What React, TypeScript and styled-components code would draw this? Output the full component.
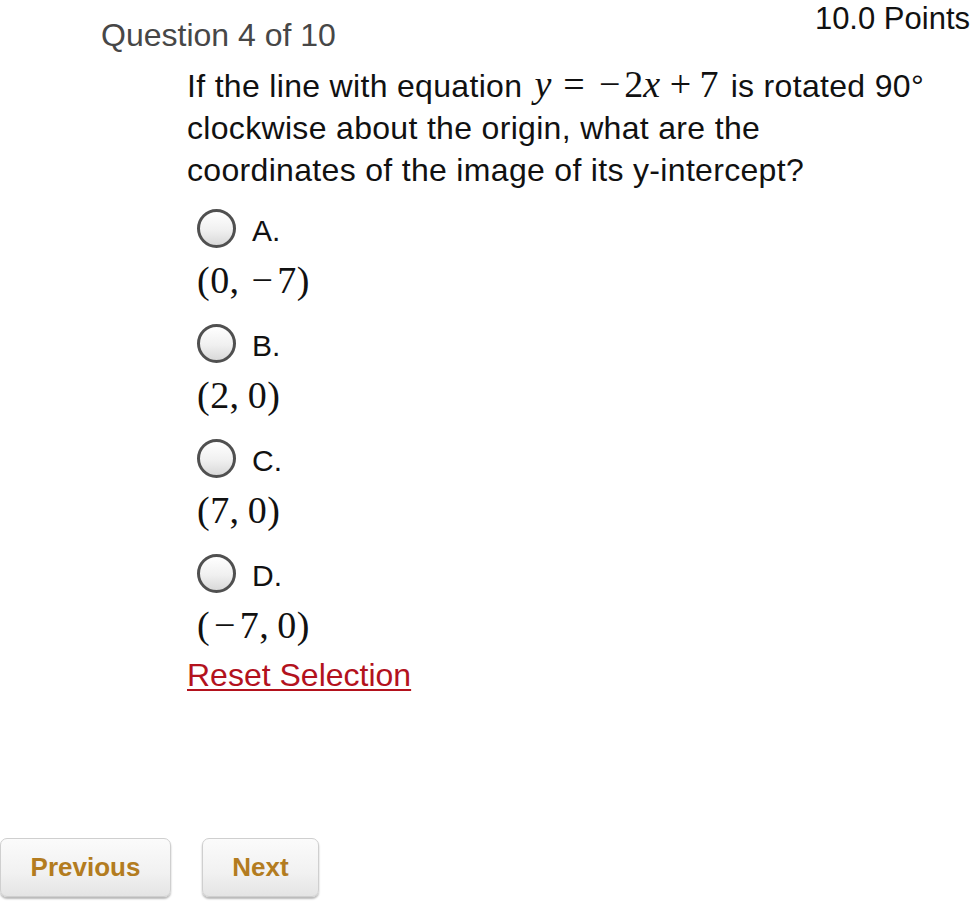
import styled, { createGlobalStyle } from "styled-components";

const GlobalStyle = createGlobalStyle`
    html, body {
        margin: 0;
        padding: 0;
        background: #ffffff;
    }

    body {
        font-family: "Liberation Sans", Arial, sans-serif;
        color: #111111;
    }
`;

// Page
const Page = styled.div`
    width: 975px;
    min-height: 905px;
    display: flex;
    flex-direction: column;
`;

// Header
const Header = styled.header`
    display: flex;
    flex-direction: row;
    justify-content: space-between;
    align-items: flex-start;
`;

const QuestionCount = styled.h2`
    margin: 17px 0 0 101px;
    font-size: 32px;
    line-height: 36px;
    font-weight: 400;
    color: #474747;
`;

const Points = styled.span`
    margin: 1px 5px 0 0;
    font-size: 31px;
    line-height: 36px;
    color: #111111;
`;

// Question body
const Body = styled.main`
    display: flex;
    flex-direction: column;
    padding-left: 187px;
    margin-top: 12px;
`;

const Prompt = styled.p`
    margin: 0;
    width: 748px;
    font-size: 32px;
    line-height: 42px;
    letter-spacing: 0.01em;
    color: #111111;
`;

const MathText = styled.span<{ size?: number }>`
    font-family: "Liberation Serif", "Times New Roman", serif;
    font-size: ${({ size }) => `${size ?? 38}px`};
    line-height: 1;
    color: #111111;
    white-space: nowrap;
`;

const InlineMath = styled(MathText)`
    padding: 0 3px;
    letter-spacing: 0;
`;

const Var = styled.i`
    font-style: italic;
    padding-right: 0.03em;
`;

const Op = styled.span<{ space: number }>`
    padding: 0 ${({ space }) => `${space}em`};
`;

const Minus = styled.span`
    padding: 0 0.1em;
`;

// Options
const Options = styled.div`
    display: flex;
    flex-direction: column;
    gap: 17px;
    margin-top: 15px;
    padding-left: 10px;
`;

const Option = styled.label`
    display: flex;
    flex-direction: column;
    cursor: pointer;
`;

const ChoiceRow = styled.div`
    display: flex;
    flex-direction: row;
    align-items: center;
    gap: 16px;
    height: 44px;
`;

const Radio = styled.span`
    box-sizing: border-box;
    width: 39px;
    height: 39px;
    border-radius: 50%;
    border: 3px solid #505050;
    background: linear-gradient(180deg, #ffffff 0%, #f0f0f0 55%, #d9d9d9 100%);
`;

const Letter = styled.span`
    font-size: 30px;
    line-height: 32px;
    margin-top: 6px;
    color: #111111;
`;

const Answer = styled.div`
    height: 48px;
    margin-top: 6px;
    display: flex;
    align-items: center;
    letter-spacing: 0.03em;
`;

// Reset
const ResetLink = styled.a`
    align-self: flex-start;
    margin-top: 5px;
    font-size: 32px;
    line-height: 42px;
    color: #b3121d;
    text-decoration: underline;
    text-decoration-thickness: 2px;
    text-underline-offset: 3px;
    cursor: pointer;
`;

// Footer buttons
const Footer = styled.footer`
    display: flex;
    flex-direction: row;
    gap: 31px;
    margin-top: 142px;
`;

const NavButton = styled.button<{ width: number }>`
    width: ${({ width }) => `${width}px`};
    height: 59px;
    border: 1px solid #cfcfcf;
    border-radius: 7px;
    background: linear-gradient(180deg, #fbfbfb 0%, #f1f1f1 60%, #e4e4e4 100%);
    box-shadow: 0 2px 2px rgba(0, 0, 0, 0.28);
    font-family: "Liberation Sans", Arial, sans-serif;
    font-size: 26px;
    font-weight: 700;
    color: #b37c20;
    cursor: pointer;
`;

type Choice = {
    letter: string;
    answer: React.ReactNode;
};

const MINUS = "\u2212";

const choices: Choice[] = [
    { letter: "A.", answer: <>(0,&thinsp;<Minus>{MINUS}</Minus>7)</> },
    { letter: "B.", answer: <>(2,&thinsp;0)</> },
    { letter: "C.", answer: <>(7,&thinsp;0)</> },
    { letter: "D.", answer: <>(<Minus>{MINUS}</Minus>7,&thinsp;0)</> },
];

export default function App() {
    return (
        <Page>
            <GlobalStyle />
            <Header>
                <QuestionCount>Question 4 of 10</QuestionCount>
                <Points>10.0 Points</Points>
            </Header>

            <Body>
                <Prompt>
                    If the line with equation{" "}
                    <InlineMath>
                        <Var>y</Var>
                        <Op space={0.28}>=</Op>
                        <Minus>{MINUS}</Minus>2<Var>x</Var>
                        <Op space={0.22}>+</Op>7
                    </InlineMath>{" "}
                    is rotated 90° clockwise about the origin, what are the coordinates of the
                    image of its y-intercept?
                </Prompt>

                <Options>
                    {choices.map((choice) => (
                        <Option key={choice.letter}>
                            <ChoiceRow>
                                <Radio />
                                <Letter>{choice.letter}</Letter>
                            </ChoiceRow>
                            <Answer>
                                <MathText>{choice.answer}</MathText>
                            </Answer>
                        </Option>
                    ))}
                </Options>

                <ResetLink>Reset Selection</ResetLink>
            </Body>

            <Footer>
                <NavButton width={171}>Previous</NavButton>
                <NavButton width={117}>Next</NavButton>
            </Footer>
        </Page>
    );
}
